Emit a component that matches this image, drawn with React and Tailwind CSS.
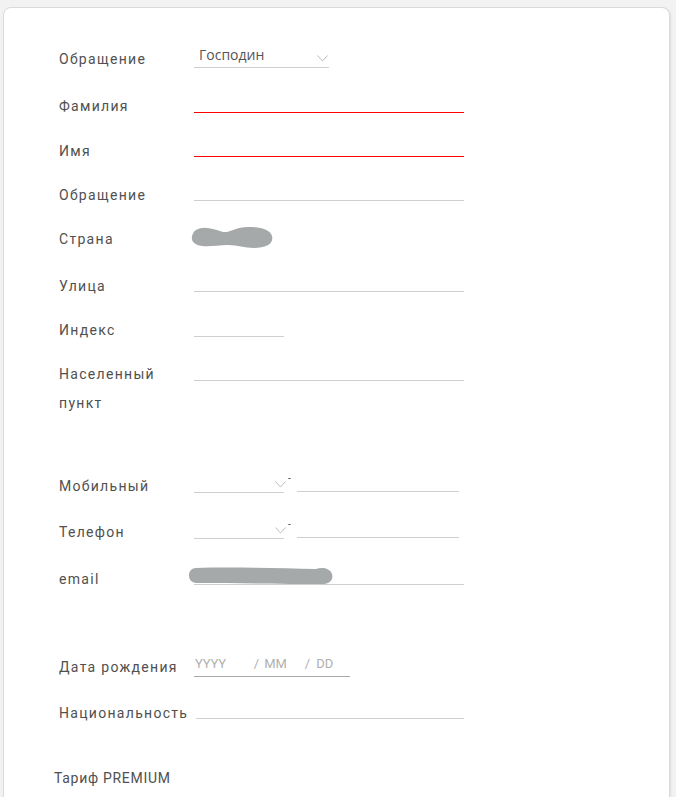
import React from "react";

const labelCls =
  "w-[135px] shrink-0 pt-[1px] text-[14px] leading-5 tracking-[1.3px] text-[#505050]";

function Chevron({ className = "" }) {
  return (
    <svg width="11" height="7" viewBox="0 0 11 7" className={className}>
      <polyline points="0.5,0.5 5.5,6 10.5,0.5" fill="none" stroke="#bdbdbd" strokeWidth="1" />
    </svg>
  );
}

function Line({ w = "w-[270px]", red = false, h = "h-[18px]" }) {
  return (
    <div
      className={`${w} ${h} border-b ${red ? "border-[#ff0000]" : "border-[#cfcfcf]"}`}
    />
  );
}

function Row({ label, h, children }) {
  return (
    <div className={`flex ${h}`}>
      <div className={labelCls}>{label}</div>
      {children}
    </div>
  );
}

function PhoneField() {
  return (
    <div className="flex items-start">
      <div className="relative h-[18px] w-[90px] border-b border-[#cfcfcf]">
        <Chevron className="absolute right-[-2px] top-[6px]" />
      </div>
      <span className="ml-[4px] mt-[-1px] text-[10px] leading-none text-[#444]">-</span>
      <div className="ml-[6px] h-[17px] w-[162px] border-b border-[#cfcfcf]" />
    </div>
  );
}

export default function App() {
  return (
    <div className="min-h-[797px] bg-[#f2f2f2] pt-[7px] pl-[3px] font-['Roboto','Liberation_Sans',sans-serif]">
      <div className="h-[820px] w-[667px] rounded-[8px] border border-[#dadada] bg-white pl-[55px] pt-[40px] shadow-[1px_1px_2px_rgba(0,0,0,0.08)]">
        <Row label="Обращение" h="h-[47px]">
          <div className="relative mt-[-3px] h-[23px] w-[135px] border-b border-[#cfcfcf]">
            <span className="absolute left-[5px] top-[-1px] font-['Open_Sans','Liberation_Sans',sans-serif] text-[14px] text-[#555]">
              Господин
            </span>
            <Chevron className="absolute right-[1px] top-[10px]" />
          </div>
        </Row>
        <Row label="Фамилия" h="h-[45px]">
          <Line red h="h-[18px]" />
        </Row>
        <Row label="Имя" h="h-[44px]">
          <Line red h="h-[17px]" />
        </Row>
        <Row label="Обращение" h="h-[44px]">
          <Line h="h-[17px]" />
        </Row>
        <Row label="Страна" h="h-[47px]">
          <svg width="86" height="26" viewBox="0 0 86 26" className="ml-[-4px] mt-[-4px]">
            <path
              d="M6 6 C14 1 24 5 33 8 C40 9 46 3 58 3 C70 3 80 5 82 12 C84 20 76 24 64 24 C54 24 48 21 38 21 C28 21 20 23 12 22 C4 21 1 17 2 12 C3 9 4 7 6 6 Z"
              fill="#a5a9a9"
            />
          </svg>
        </Row>
        <Row label="Улица" h="h-[44px]">
          <Line h="h-[17px]" />
        </Row>
        <Row label="Индекс" h="h-[41px]">
          <Line w="w-[90px]" h="h-[18px]" />
        </Row>
        <div className="flex h-[115px]">
          <div className="w-[135px] shrink-0 text-[14px] leading-[29px] tracking-[1.3px] text-[#505050]">
            Населенный
            <br />
            пункт
          </div>
          <Line h="h-[21px]" />
        </div>
        <Row label="Мобильный" h="h-[46px]">
          <PhoneField />
        </Row>
        <Row label="Телефон" h="h-[47px]">
          <PhoneField />
        </Row>
        <Row label="email" h="h-[88px]">
          <div className="relative h-[17px] w-[270px] border-b border-[#cfcfcf]">
            <svg width="146" height="20" viewBox="0 0 146 20" className="absolute left-[-6px] top-[-2px]">
              <path
                d="M8 2 C40 1 90 2 128 3 C134 1 142 2 144 8 C146 15 140 19 132 18 C100 18 50 17 9 17 C3 17 1 13 1 9 C1 5 4 2 8 2 Z"
                fill="#a5a9a9"
              />
            </svg>
          </div>
        </Row>
        <Row label="Дата рождения" h="h-[46px]">
          <div className="flex h-[21px] w-[156px] items-start border-b border-[#a8a8a8] text-[13px] leading-4 text-[#b0b0b0]">
            <span className="ml-[1px] tracking-[-0.2px]">YYYY</span>
            <span className="ml-[28px]">/</span>
            <span className="ml-[5px]">MM</span>
            <span className="ml-[18px]">/</span>
            <span className="ml-[6px]">DD</span>
          </div>
        </Row>
        <Row label="Национальность" h="h-[66px]">
          <div className="ml-[2px] h-[17px] w-[268px] border-b border-[#cfcfcf]" />
        </Row>
        <div className="ml-[-5px] text-[14px] leading-5 tracking-[0.7px] text-[#505050]">
          Тариф PREMIUM
        </div>
      </div>
    </div>
  );
}
